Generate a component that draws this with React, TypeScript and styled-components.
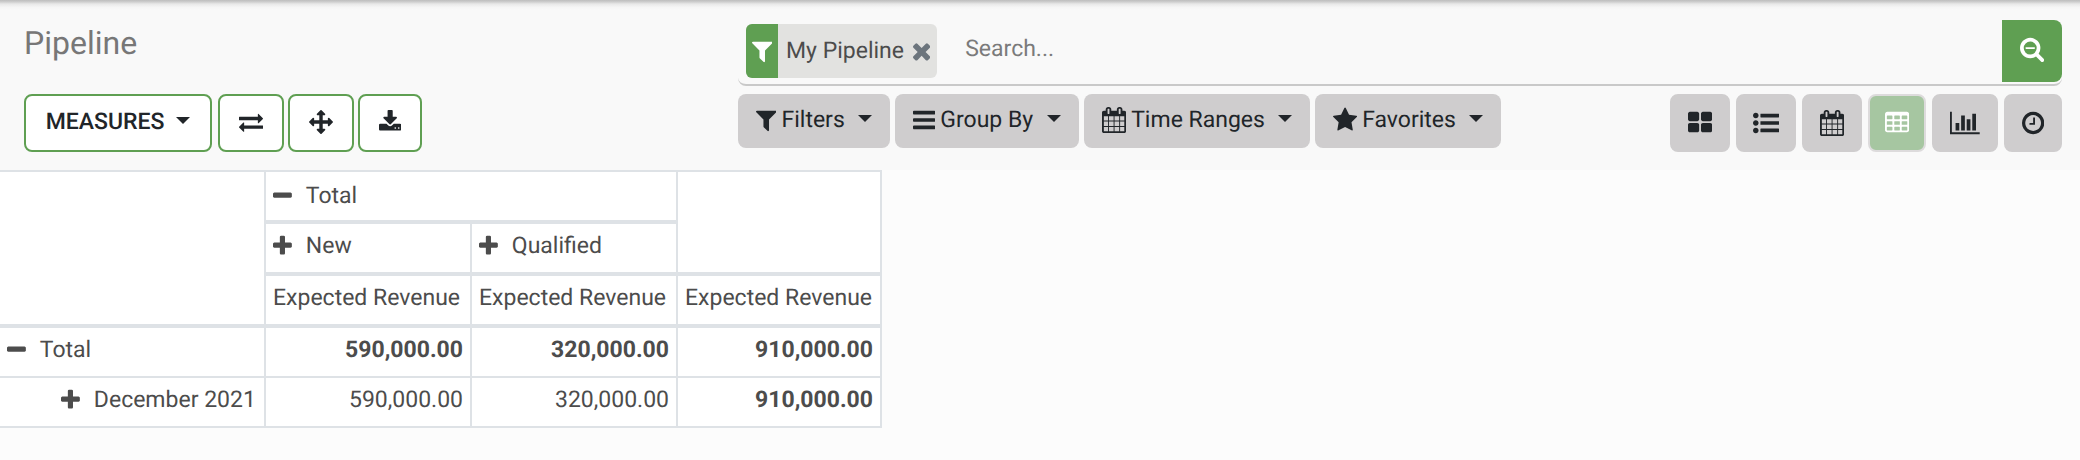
import React from 'react';
import styled, { createGlobalStyle } from 'styled-components';

const GlobalStyle = createGlobalStyle`
  *, *::before, *::after { box-sizing: border-box; }
  body {
    margin: 0;
    background: #fcfcfc;
    color: #4c4c4c;
    font-family: Roboto, "Liberation Sans", sans-serif;
    font-size: 23px;
    line-height: 36px;
    text-rendering: geometricPrecision;
  }
  button, input { font: inherit; text-rendering: inherit; }
`;

/* Each glyph: x offset, advance width on a 1792-unit em, path. */
const glyphs = {
  filter: [190, 1412, 'M1595 295q17 41-14 70l-493 493v742q0 42-39 59-13 5-25 5-27 0-45-19l-256-256q-19-19-19-45v-486l-493-493q-31-29-14-70 17-39 59-39h1280q42 0 59 39z'],
  bars: [128, 1536, 'M1664 1344v128q0 26-19 45t-45 19h-1408q-26 0-45-19t-19-45v-128q0-26 19-45t45-19h1408q26 0 45 19t19 45zm0-512v128q0 26-19 45t-45 19h-1408q-26 0-45-19t-19-45v-128q0-26 19-45t45-19h1408q26 0 45 19t19 45zm0-512v128q0 26-19 45t-45 19h-1408q-26 0-45-19t-19-45v-128q0-26 19-45t45-19h1408q26 0 45 19t19 45z'],
  calendar: [64, 1664, 'M192 1664h288v-288h-288v288zm352 0h320v-288h-320v288zm-352-352h288v-320h-288v320zm352 0h320v-320h-320v320zm-352-384h288v-288h-288v288zm736 736h320v-288h-320v288zm-384-736h320v-288h-320v288zm768 736h288v-288h-288v288zm-384-352h320v-320h-320v320zm-352-864v-288q0-13-9.500-22.500t-22.500-9.500h-64q-13 0-22.500 9.500t-9.500 22.500v288q0 13 9.500 22.500t22.500 9.500h64q13 0 22.500-9.500t9.500-22.500zm736 864h288v-320h-288v320zm-384-384h320v-288h-320v288zm384 0h288v-288h-288v288zm32-480v-288q0-13-9.500-22.500t-22.500-9.500h-64q-13 0-22.500 9.500t-9.500 22.500v288q0 13 9.500 22.500t22.500 9.500h64q13 0 22.500-9.500t9.500-22.500zm384-64v1280q0 52-38 90t-90 38h-1408q-52 0-90-38t-38-90v-1280q0-52 38-90t90-38h128v-96q0-66 47-113t113-47h64q66 0 113 47t47 113v96h384v-96q0-66 47-113t113-47h64q66 0 113 47t47 113v96h128q52 0 90 38t38 90z'],
  star: [64, 1664, 'M1728 647q0 22-26 48l-363 354 86 500q1 7 1 20 0 21-10.500 35.500t-30.500 14.500q-19 0-40-12l-449-236-449 236q-22 12-40 12-21 0-31.500-14.500t-10.500-35.500q0-6 2-20l86-500-364-354q-25-27-25-48 0-37 56-46l502-73 225-455q19-41 49-41t49 41l225 455 502 73q56 9 56 46z'],
  thLarge: [64, 1664, 'M832 1024v384q0 52-38 90t-90 38h-512q-52 0-90-38t-38-90v-384q0-52 38-90t90-38h512q52 0 90 38t38 90zm0-768v384q0 52-38 90t-90 38h-512q-52 0-90-38t-38-90v-384q0-52 38-90t90-38h512q52 0 90 38t38 90zm896 768v384q0 52-38 90t-90 38h-512q-52 0-90-38t-38-90v-384q0-52 38-90t90-38h512q52 0 90 38t38 90zm0-768v384q0 52-38 90t-90 38h-512q-52 0-90-38t-38-90v-384q0-52 38-90t90-38h512q52 0 90 38t38 90z'],
  list: [0, 1792, 'M384 1408q0 80-56 136t-136 56-136-56-56-136 56-136 136-56 136 56 56 136zm0-512q0 80-56 136t-136 56-136-56-56-136 56-136 136-56 136 56 56 136zm1408 416v192q0 13-9.500 22.500t-22.500 9.500h-1216q-13 0-22.500-9.500t-9.500-22.500v-192q0-13 9.500-22.500t22.500-9.500h1216q13 0 22.500 9.500t9.500 22.500zm-1408-928q0 80-56 136t-136 56-136-56-56-136 56-136 136-56 136 56 56 136zm1408 416v192q0 13-9.500 22.500t-22.500 9.500h-1216q-13 0-22.500-9.500t-9.500-22.500v-192q0-13 9.500-22.500t22.500-9.500h1216q13 0 22.500 9.500t9.500 22.500zm0-512v192q0 13-9.500 22.500t-22.500 9.500h-1216q-13 0-22.500-9.500t-9.500-22.500v-192q0-13 9.500-22.500t22.500-9.500h1216q13 0 22.500 9.500t9.500 22.500z'],
  table: [64, 1664, 'M1728 288v1088q0 66-47 113t-113 47h-1344q-66 0-113-47t-47-113v-1088q0-66 47-113t113-47h1344q66 0 113 47t47 113z' +
    [192, 704, 1216].map((x) => [384, 768, 1152].map((y) => `M${x + 32} ${y}h320q32 0 32 32v192q0 32-32 32h-320q-32 0-32-32v-192q0-32 32-32z`).join('')).join('')],
  clock: [128, 1536, 'M1024 544v448q0 14-9 23t-23 9h-320q-14 0-23-9t-9-23v-64q0-14 9-23t23-9h224v-352q0-14 9-23t23-9h64q14 0 23 9t9 23zm416 352q0-148-73-273t-198-198-273-73-273 73-198 198-73 273 73 273 198 198 273 73 273-73 198-198 73-273zm224 0q0 209-103 385.500t-279.500 279.500-385.500 103-385.500-103-279.500-279.500-103-385.500 103-385.500 279.500-279.500 385.500-103 385.500 103 279.500 279.500 103 385.500z'],
  chart: [0, 2048, 'M640 896v512h-256v-512h256zm384-512v1024h-256v-1024h256zm1024 1152v128h-2048v-1536h128v1408h1920zm-640-896v768h-256v-768h256zm384-384v1152h-256v-1152h256z'],
  times: [302, 1188, 'M1490 1322q0 40-28 68l-136 136q-28 28-68 28t-68-28l-294-294-294 294q-28 28-68 28t-68-28l-136-136q-28-28-28-68t28-68l294-294-294-294q-28-28-28-68t28-68l136-136q28-28 68-28t68 28l294 294 294-294q28-28 68-28t68 28l136 136q28 28 28 68t-28 68l-294 294 294 294q28 28 28 68z'],
  searchMinus: [128, 1664, 'M1152 800v64q0 13-9.500 22.500t-22.500 9.500h-576q-13 0-22.500-9.500t-9.500-22.500v-64q0-13 9.500-22.500t22.500-9.500h576q13 0 22.500 9.500t9.500 22.500zm128 32q0-185-131.500-316.500t-316.500-131.500-316.500 131.500-131.500 316.500 131.500 316.500 316.500 131.500 316.500-131.500 131.500-316.500zm512 832q0 53-37.500 90.500t-90.500 37.500q-54 0-90-38l-343-342q-179 124-399 124-143 0-273.500-55.500t-225-150-150-225-55.500-273.500 55.500-273.500 150-225 225-150 273.500-55.500 273.500 55.500 225 150 150 225 55.500 273.500q0 220-124 399l343 343q37 37 37 90z'],
  plus: [192, 1408, 'M1600 736v192q0 40-28 68t-68 28h-416v416q0 40-28 68t-68 28h-192q-40 0-68-28t-28-68v-416h-416q-40 0-68-28t-28-68v-192q0-40 28-68t68-28h416v-416q0-40 28-68t68-28h192q40 0 68 28t28 68v416h416q40 0 68 28t28 68z'],
  minus: [192, 1408, 'M1600 736v192q0 40-28 68t-68 28h-1216q-40 0-68-28t-28-68v-192q0-40 28-68t68-28h1216q40 0 68 28t28 68z'],
  exchange: [0, 1792, 'M1792 1184v192q0 13-9.500 22.500t-22.500 9.500h-1376v192q0 13-9.500 22.500t-22.500 9.500q-12 0-24-10l-319-320q-9-9-9-22 0-14 9-23l320-320q9-9 23-9 13 0 22.500 9.500t9.500 22.500v192h1376q13 0 22.500 9.500t9.500 22.500zm0-544q0 14-9 23l-320 320q-9 9-23 9-13 0-22.500-9.500t-9.500-22.500v-192h-1376q-13 0-22.500-9.500t-9.500-22.500v-192q0-13 9.500-22.500t22.500-9.500h1376v-192q0-14 9-23t23-9q12 0 24 10l319 319q9 9 9 23z'],
  arrows: [0, 1792, 'M1792 896q0 26-19 45l-256 256q-19 19-45 19t-45-19-19-45v-128h-384v384h128q26 0 45 19t19 45-19 45l-256 256q-19 19-45 19t-45-19l-256-256q-19-19-19-45t19-45 45-19h128v-384h-384v128q0 26-19 45t-45 19-45-19l-256-256q-19-19-19-45t19-45l256-256q19-19 45-19t45 19 19 45v128h384v-384h-128q-26 0-45-19t-19-45 19-45l256-256q19-19 45-19t45 19l256 256q19 19 19 45t-19 45-45 19h-128v384h384v-128q0-26 19-45t45-19 45 19l256 256q19 19 19 45z'],
  download: [64, 1664, 'M1344 1344q0-26-19-45t-45-19-45 19-19 45 19 45 45 19 45-19 19-45zm256 0q0-26-19-45t-45-19-45 19-19 45 19 45 45 19 45-19 19-45zm128-224v320q0 40-28 68t-68 28h-1472q-40 0-68-28t-28-68v-320q0-40 28-68t68-28h465l135 136q58 56 136 56t136-56l136-136h464q40 0 68 28t28 68zm-325-569q17 41-14 70l-448 448q-18 19-45 19t-45-19l-448-448q-31-29-14-70 17-39 59-39h256v-448q0-26 19-45t45-19h256q26 0 45 19t19 45v448h256q42 0 59 39z'],
} as const;

type GlyphName = keyof typeof glyphs;

const Glyph = styled.svg`
  display: block;
  flex: none;
  fill: currentColor;
`;

function Icon({ name, size = 26 }: { name: GlyphName; size?: number }) {
  const [x, width, d] = glyphs[name];
  return (
    <Glyph aria-hidden="true" height={size} width={(size * width) / 1792} viewBox={`${x} 0 ${width} 1792`}>
      <path d={d} fillRule={name === 'table' ? 'evenodd' : 'nonzero'} />
    </Glyph>
  );
}

const ControlPanel = styled.header`
  display: grid;
  grid-template-columns: minmax(420px, 714px) minmax(0, 1fr);
  row-gap: 8px;
  padding: 20px 18px 18px 24px;
  background: linear-gradient(#bdbdbd, #cfcfcf 2px, #e8e8e8 4px, #f5f5f5 7px, #f9f9f9 10px) #f9f9f9;
`;

const Title = styled.h1`
  margin: 0;
  padding-top: 4px;
  color: #777;
  font-size: 32px;
  font-weight: 400;
  line-height: 38px;
`;

const SearchBar = styled.div`
  display: flex;
  align-items: flex-start;
  height: 66px;
  padding-left: 8px;
  border-bottom: 2px solid #c9c9c9;
  border-radius: 0 0 8px 8px;
`;

const Facet = styled.div`
  display: flex;
  align-items: center;
  height: 54px;
  margin-top: 4px;
  padding-right: 7px;
  border-radius: 6px;
  background: #e2e2e0;
  white-space: nowrap;
  overflow: hidden;
`;

const FacetMark = styled.span`
  display: grid;
  place-items: center;
  width: 32px;
  height: 54px;
  margin-right: 8px;
  background: #5f9f52;
  color: #fff;
`;

const FacetRemove = styled.button`
  margin: 0 0 0 9px;
  padding: 0;
  border: 0;
  background: none;
  color: #6c757d;
`;

const SearchInput = styled.input`
  flex: 1;
  min-width: 0;
  height: 56px;
  padding: 0 0 0 28px;
  border: 0;
  background: none;
  color: #4c4c4c;
  outline: 0;
  &::placeholder { color: #7b7b7b; opacity: 1; }
`;

const SearchButton = styled.button`
  display: grid;
  place-items: center;
  width: 60px;
  height: 62px;
  padding: 0 0 4px;
  border: 0;
  border-radius: 0 8px 8px 0;
  background: #5f9f52;
  color: #fff;
`;

const ButtonRow = styled.div<{ $gap: number }>`
  display: flex;
  align-items: flex-start;
  gap: ${(p) => p.$gap}px;
`;

const OutlineButton = styled.button<{ $width: number }>`
  display: flex;
  align-items: center;
  justify-content: center;
  width: ${(p) => p.$width}px;
  height: 58px;
  padding: 0 0 2px;
  border: 2px solid #5f9f52;
  border-radius: 8px;
  background: #fff;
  color: #212529;
  font-weight: 500;
`;

const Caret = styled.span`
  width: 14px;
  height: 7px;
  margin: 0 0 4px 12px;
  border: 7px solid transparent;
  border-top-color: currentColor;
  border-bottom: 0;
`;

const SearchTools = styled.div`
  display: flex;
  align-items: flex-start;
  justify-content: space-between;
`;

const FilterButton = styled.button<{ $width: number }>`
  display: flex;
  align-items: center;
  justify-content: space-between;
  width: ${(p) => p.$width}px;
  height: 54px;
  padding: 0 18px 2px;
  border: 0;
  border-radius: 8px;
  background: #cfcdce;
  color: #212529;
  white-space: nowrap;
`;

const FilterLabel = styled.span`
  display: flex;
  align-items: center;
  gap: 5px;
`;

const ViewButton = styled.button<{ $width: number; $active?: boolean }>`
  display: grid;
  place-items: center;
  width: ${(p) => p.$width}px;
  height: 58px;
  padding: 0 0 1px;
  border: 2px solid ${(p) => (p.$active ? '#dddbdc' : '#cfcdce')};
  border-radius: 8px;
  background: ${(p) => (p.$active ? '#a6c6a1' : '#cfcdce')};
  color: ${(p) => (p.$active ? '#fff' : '#212529')};
`;

const PivotTable = styled.table`
  width: 881px;
  table-layout: fixed;
  border-collapse: collapse;
  background: #fff;

  th, td {
    height: 48px;
    padding: 4px 7px 8px;
    border: 2px solid #dee2e6;
    font-weight: 400;
    text-align: left;
    vertical-align: top;
    white-space: nowrap;
  }
  thead th { border-bottom-width: 4px; }
  thead tr:first-child th { padding: 6px 7px; }
  tr > :first-child.edge { border-left: 0; }
`;

const Col = styled.col<{ $width: number }>`
  width: ${(p) => p.$width}px;
`;

const Toggle = styled.button<{ $indent?: boolean }>`
  display: flex;
  align-items: center;
  gap: 14px;
  margin: 0;
  padding: 0 0 0 ${(p) => (p.$indent ? 54 : 0)}px;
  border: 0;
  background: none;
  color: inherit;
`;

const Amount = styled.td<{ $strong?: boolean }>`
  &&& {
    text-align: right;
    font-weight: ${(p) => (p.$strong ? 700 : 400)};
  }
`;

const filters: { icon: GlyphName; label: string; width: number }[] = [
  { icon: 'filter', label: 'Filters', width: 152 },
  { icon: 'bars', label: 'Group By', width: 184 },
  { icon: 'calendar', label: 'Time Ranges', width: 226 },
  { icon: 'star', label: 'Favorites', width: 186 },
];

const views: { icon: GlyphName; label: string; width: number; active?: boolean }[] = [
  { icon: 'thLarge', label: 'Kanban', width: 60 },
  { icon: 'list', label: 'List', width: 60 },
  { icon: 'calendar', label: 'Calendar', width: 60 },
  { icon: 'table', label: 'Pivot', width: 58, active: true },
  { icon: 'chart', label: 'Graph', width: 66 },
  { icon: 'clock', label: 'Activity', width: 58 },
];

const rows = [
  { label: 'Total', open: true, values: ['590,000.00', '320,000.00', '910,000.00'] },
  { label: 'December 2021', open: false, values: ['590,000.00', '320,000.00', '910,000.00'] },
];

function GroupToggle({ label, open, indent }: { label: string; open?: boolean; indent?: boolean }) {
  return (
    <Toggle type="button" aria-expanded={!!open} $indent={indent}>
      <Icon name={open ? 'minus' : 'plus'} size={24} />
      {label}
    </Toggle>
  );
}

export default function App() {
  return (
    <>
      <GlobalStyle />
      <ControlPanel>
        <Title>Pipeline</Title>
        <SearchBar role="search">
          <Facet>
            <FacetMark><Icon name="filter" /></FacetMark>
            My Pipeline
            <FacetRemove type="button" aria-label="Remove"><Icon name="times" /></FacetRemove>
          </Facet>
          <SearchInput type="text" placeholder="Search..." aria-label="Search" />
          <SearchButton type="button" aria-label="Advanced search"><Icon name="searchMinus" /></SearchButton>
        </SearchBar>
        <ButtonRow $gap={6}>
          <OutlineButton type="button" $width={188}>MEASURES<Caret /></OutlineButton>
          <ButtonRow $gap={4}>
            <OutlineButton type="button" $width={66} aria-label="Flip axis"><Icon name="exchange" size={24} /></OutlineButton>
            <OutlineButton type="button" $width={66} aria-label="Expand all"><Icon name="arrows" size={24} /></OutlineButton>
            <OutlineButton type="button" $width={64} aria-label="Download"><Icon name="download" size={24} /></OutlineButton>
          </ButtonRow>
        </ButtonRow>
        <SearchTools>
          <ButtonRow $gap={5}>
            {filters.map((f) => (
              <FilterButton key={f.label} type="button" $width={f.width}>
                <FilterLabel><Icon name={f.icon} />{f.label}</FilterLabel>
                <Caret />
              </FilterButton>
            ))}
          </ButtonRow>
          <ButtonRow $gap={6}>
            {views.map((v) => (
              <ViewButton key={v.label} type="button" aria-label={v.label} aria-pressed={!!v.active} $width={v.width} $active={v.active}>
                <Icon name={v.icon} />
              </ViewButton>
            ))}
          </ButtonRow>
        </SearchTools>
      </ControlPanel>
      <main>
        <PivotTable>
          <colgroup>
            <Col $width={265} />
            <Col $width={206} />
            <Col $width={206} />
            <Col $width={204} />
          </colgroup>
          <thead>
            <tr>
              <th className="edge" rowSpan={3} />
              <th colSpan={2}><GroupToggle label="Total" open /></th>
              <th rowSpan={2} />
            </tr>
            <tr>
              <th><GroupToggle label="New" /></th>
              <th><GroupToggle label="Qualified" /></th>
            </tr>
            <tr>
              <th>Expected Revenue</th>
              <th>Expected Revenue</th>
              <th>Expected Revenue</th>
            </tr>
          </thead>
          <tbody>
            {rows.map((row) => (
              <tr key={row.label}>
                <th className="edge" scope="row"><GroupToggle label={row.label} open={row.open} indent={!row.open} /></th>
                {row.values.map((value, i) => (
                  <Amount key={i} $strong={row.open || i === 2}>{value}</Amount>
                ))}
              </tr>
            ))}
          </tbody>
        </PivotTable>
      </main>
    </>
  );
}
